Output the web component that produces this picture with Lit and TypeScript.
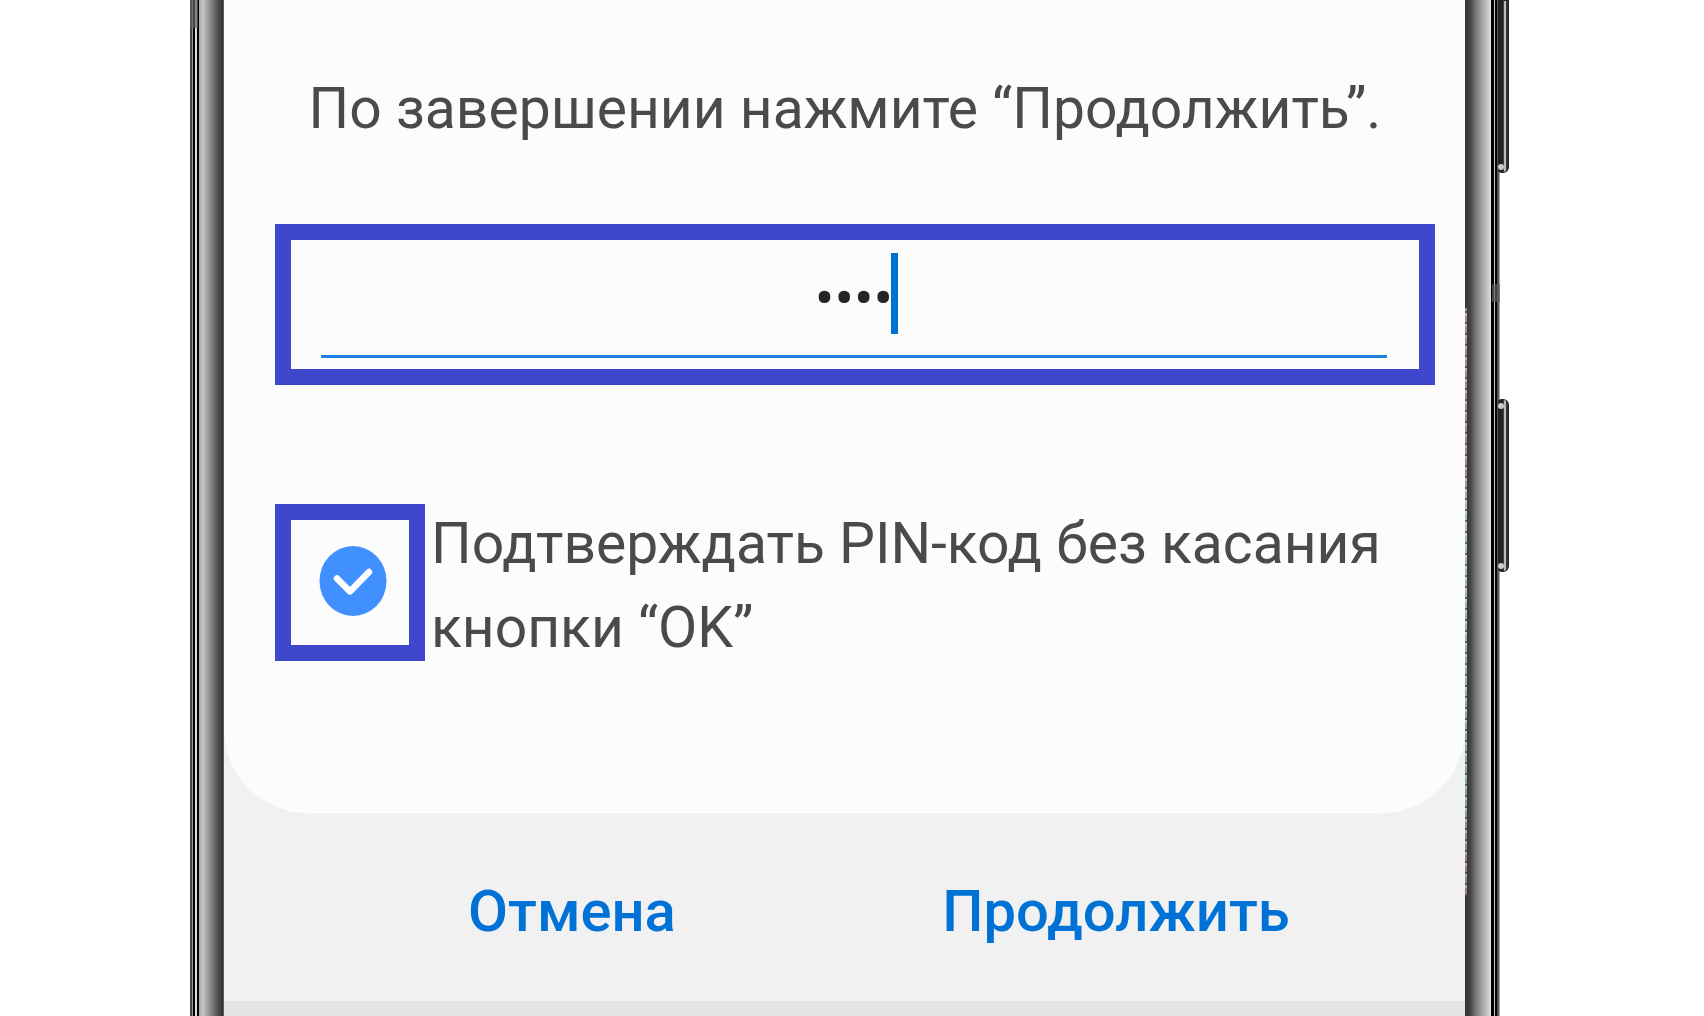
import { LitElement, html, css } from "lit";
import { customElement, state } from "lit/decorators.js";

@customElement("app-root")
export class AppRoot extends LitElement {
  @state() private pin = "1234";
  @state() private autoConfirm = true;

  static styles = css`
    :host {
      display: block;
      background: #fff;
      font-family: Roboto, "Liberation Sans", sans-serif;
      color: #4a4a4a;
    }
    .stage {
      display: grid;
      grid-template-columns: 190fr 34px minmax(0, 1241fr) 35px 204fr;
      min-height: 100vh;
    }
    .edge {
      position: relative;
    }
    .left {
      grid-column: 2;
      background: linear-gradient(
        90deg,
        #444 0 2px, #999 2px 3px, #000 3px 5px, #ddd 5px 7px, #000 7px 9px,
        #aaa 9px, #c4c4c4 13px, #8c8c8c 20px, #505050 28px, #303030 33px, #888 34px
      );
    }
    .right {
      grid-column: 4;
      background: linear-gradient(
        90deg,
        #333 0, #424242 5px, #777 11px, #aaa 18px, #d0d0d0 24px, #e4e4e4 26px,
        #000 26px 29px, #ccc 29px 30px, #000 30px 32px, #555 32px 34px, #aaa 34px 35px
      );
    }
    .joint {
      position: absolute;
      width: 8px;
      background: #606060;
      opacity: 0.7;
    }
    .left .joint {
      top: 0;
      left: 0;
      height: 28px;
    }
    .right .joint {
      top: 284px;
      right: 0;
      height: 18px;
    }
    .glint {
      position: absolute;
      left: 0;
      top: 308px;
      width: 2px;
      height: 588px;
      background:
        repeating-linear-gradient(#0000 0 3px, #2228 3px 5px, #fff5 5px 8px, #0000 8px 11px),
        linear-gradient(#a98a84 0 28%, #a9c4b8 34%, #7fa594 85%, #9a8078 92%);
    }
    .key {
      position: absolute;
      left: 33px;
      width: 11px;
      box-sizing: border-box;
      border: 1px solid #222;
      border-left: 0;
      background: linear-gradient(90deg, #222 0 5px, #444 5px 6px, #bbb 6px 8px, #333 8px);
    }
    .key::after {
      content: "";
      position: absolute;
      left: 0;
      width: 6px;
      height: 6px;
      border-radius: 50%;
      background: #ccc;
    }
    .volume {
      top: 0;
      height: 173px;
      border-radius: 0 0 6px 4px;
    }
    .volume::after {
      bottom: 2px;
    }
    .power {
      top: 399px;
      height: 173px;
      border-radius: 4px 6px 6px 4px;
    }
    .power::after {
      top: 3px;
    }
    .power::before {
      content: "";
      position: absolute;
      left: 0;
      bottom: 2px;
      width: 6px;
      height: 6px;
      border-radius: 50%;
      background: #ccc;
    }
    .screen {
      display: flex;
      flex-direction: column;
      background: #f1f1f1;
    }
    .card {
      display: flex;
      flex-direction: column;
      box-sizing: border-box;
      min-height: 813px;
      padding: 67px 30px 0 51px;
      border-radius: 0 0 84px 84px;
      background: #fcfcfc;
    }
    .hint {
      margin: 0 0 73px;
      padding-right: 20px;
      text-align: center;
      font-size: 57px;
      line-height: 84px;
      white-space: nowrap;
    }
    .marked {
      box-sizing: border-box;
      border: 16px solid #3f48cc;
    }
    .pin {
      height: 161px;
      padding: 13px 32px 0 30px;
      margin-bottom: 119px;
    }
    .pin-field {
      position: relative;
      height: 105px;
      box-sizing: border-box;
      border-bottom: 3px solid #1c80e2;
    }
    .pin-input {
      display: block;
      box-sizing: border-box;
      width: 100%;
      height: 85px;
      padding: 4px 0 0;
      border: 0;
      outline: 0;
      background: none;
      color: #252525;
      caret-color: transparent;
      font: 400 58px/81px Roboto, "Liberation Sans", sans-serif;
      text-align: center;
    }
    .caret {
      position: absolute;
      top: 0;
      left: calc(50% + 37px);
      width: 7px;
      height: 81px;
      background: #0072d6;
    }
    .confirm {
      display: flex;
      align-items: flex-start;
      gap: 6px;
    }
    .tick-frame {
      flex: none;
      display: grid;
      place-items: center;
      width: 150px;
      height: 157px;
      padding: 0 0 4px 6px;
    }
    .tick {
      position: relative;
      display: block;
      width: 68px;
      height: 70px;
    }
    .tick-input {
      position: absolute;
      inset: 0;
      width: 100%;
      height: 100%;
      margin: 0;
      opacity: 0;
      cursor: pointer;
    }
    .tick-icon {
      display: block;
      width: 100%;
      height: 100%;
    }
    .confirm-label {
      flex: 1;
      margin-top: -2px;
      font-size: 57px;
      line-height: 84px;
    }
    .actions {
      display: grid;
      grid-template-columns: 1fr 1fr;
      height: 188px;
      padding: 0 77px 0 76px;
      box-sizing: border-box;
    }
    .action {
      padding: 8px 0 0;
      border: 0;
      background: none;
      color: #0072d6;
      font: 500 58px/84px Roboto, "Liberation Sans", sans-serif;
      cursor: pointer;
    }
    .nav {
      flex: 1;
      min-height: 15px;
      background: #e4e4e4;
    }
  `;

  private clear() {
    this.pin = "";
    this.autoConfirm = false;
  }

  render() {
    return html`
      <div class="stage">
        <div class="edge left"><span class="joint"></span></div>
        <main class="screen">
          <section class="card">
            <p class="hint" id="hint">По завершении нажмите “Продолжить”.</p>
            <div class="marked pin">
              <div class="pin-field">
                <input
                  class="pin-input"
                  type="password"
                  inputmode="numeric"
                  autocomplete="off"
                  aria-labelledby="hint"
                  .value=${this.pin}
                  @input=${(e: Event) => (this.pin = (e.target as HTMLInputElement).value)}
                />
                <span class="caret"></span>
              </div>
            </div>
            <div class="confirm">
              <div class="marked tick-frame">
                <span class="tick">
                  <svg class="tick-icon" viewBox="0 0 68 70" aria-hidden="true">
                    <ellipse cx="34" cy="35" rx="33.5" ry="35" fill=${this.autoConfirm ? "#4190ff" : "#c8c8c8"} />
                    <path d="M18 32.5 L31 45.5 L50 26" fill="none" stroke="#fff" stroke-width="6.5" stroke-linecap="round" stroke-linejoin="round" />
                  </svg>
                  <input
                    class="tick-input"
                    id="auto"
                    type="checkbox"
                    .checked=${this.autoConfirm}
                    @change=${(e: Event) => (this.autoConfirm = (e.target as HTMLInputElement).checked)}
                  />
                </span>
              </div>
              <label class="confirm-label" for="auto">Подтверждать PIN-код без касания кнопки “OK”</label>
            </div>
          </section>
          <div class="actions">
            <button class="action" type="button" @click=${this.clear}>Отмена</button>
            <button class="action" type="button">Продолжить</button>
          </div>
          <div class="nav"></div>
        </main>
        <div class="edge right">
          <span class="glint"></span>
          <span class="joint"></span>
          <span class="key volume"></span>
          <span class="key power"></span>
        </div>
      </div>
    `;
  }
}
